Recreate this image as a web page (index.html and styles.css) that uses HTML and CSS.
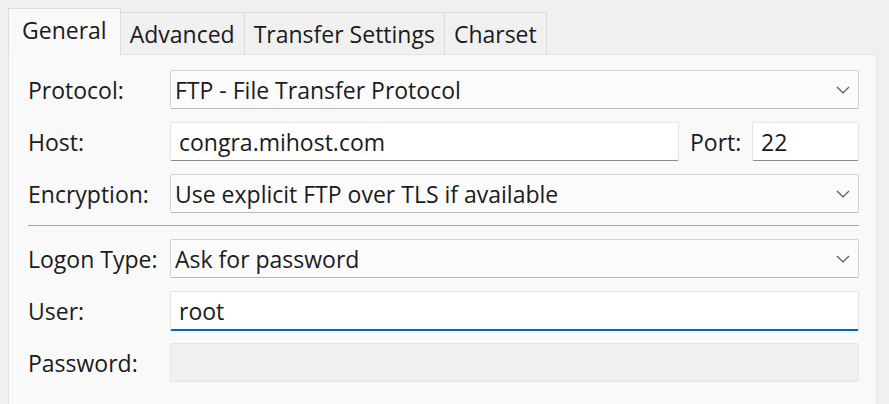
FILE: index.html
```html
<!DOCTYPE html>
<html>
<head>
<meta charset="utf-8">
<link rel="stylesheet" href="styles.css">
</head>
<body>
<div class="tabs">
  <div class="tab active">General</div>
  <div class="tab">Advanced</div>
  <div class="tab">Transfer Settings</div>
  <div class="tab">Charset</div>
</div>
<div class="panel">
  <div class="row">
    <span class="label">Protocol:</span>
    <div class="select"><span>FTP - File Transfer Protocol</span><svg class="chev" width="14" height="8" viewBox="0 0 14 8"><path d="M1 1 L7 7 L13 1" fill="none" stroke="#555" stroke-width="1.2"/></svg></div>
  </div>
  <div class="row">
    <span class="label">Host:</span>
    <div class="hostline">
      <div class="input grow">congra.mihost.com</div>
      <span class="portlabel">Port:</span>
      <div class="input port">22</div>
    </div>
  </div>
  <div class="row">
    <span class="label">Encryption:</span>
    <div class="select"><span>Use explicit FTP over TLS if available</span><svg class="chev" width="14" height="8" viewBox="0 0 14 8"><path d="M1 1 L7 7 L13 1" fill="none" stroke="#555" stroke-width="1.2"/></svg></div>
  </div>
  <div class="sep"></div>
  <div class="row">
    <span class="label">Logon Type:</span>
    <div class="select"><span>Ask for password</span><svg class="chev" width="14" height="8" viewBox="0 0 14 8"><path d="M1 1 L7 7 L13 1" fill="none" stroke="#555" stroke-width="1.2"/></svg></div>
  </div>
  <div class="row">
    <span class="label">User:</span>
    <div class="input focus">root</div>
  </div>
  <div class="row">
    <span class="label">Password:</span>
    <div class="input disabled"></div>
  </div>
</div>
</body>
</html>
```
FILE: styles.css
```css
html, body {
  margin: 0;
  height: 100%;
}
body {
  background: #f0f0f0;
  font-family: "Open Sans", "Noto Sans", sans-serif;
  font-size: 23px;
  color: #1b1b1b;
  padding: 8px 12px 0 8px;
  box-sizing: border-box;
  display: flex;
  flex-direction: column;
}
.tabs {
  display: flex;
  align-items: flex-end;
  height: 46px;
  position: relative;
  z-index: 1;
}
.tab {
  height: 42px;
  box-sizing: border-box;
  padding: 6px 9px 0 9px;
  border: 1px solid #dcdcdc;
  border-bottom: none;
  border-left: none;
  background: #f0f0f0;
  line-height: 30px;
}
.tab.active {
  height: 47px;
  margin-bottom: -1px;
  background: #f9f9f9;
  border-left: 1px solid #dcdcdc;
  padding: 6px 13px 0 13px;
}
.panel {
  flex: 1;
  background: #f9f9f9;
  border: 1px solid #e3e3e3;
  border-bottom: none;
  padding: 15px 17px 0 19px;
}
.row {
  display: flex;
  align-items: center;
  height: 39px;
  margin-bottom: 13px;
}
.label {
  width: 142px;
  flex: none;
  padding-top: 1px;
}
.select, .input {
  flex: 1;
  height: 39px;
  box-sizing: border-box;
  display: flex;
  align-items: center;
  padding-left: 4px;
  padding-top: 1px;
}
.select {
  background: #fbfbfb;
  border: 1px solid #d4d4d4;
  border-bottom-color: #b9b9b9;
  border-radius: 2px;
  justify-content: space-between;
  padding-right: 8px;
}
.input {
  background: #ffffff;
  border: 1px solid #e5e5e5;
  border-bottom-color: #8c8c8c;
  border-radius: 2px;
  padding-left: 8px;
}
.hostline {
  flex: 1;
  display: flex;
  align-items: center;
  height: 39px;
}
.input.grow {
  flex: 1;
}
.portlabel {
  flex: none;
  width: 73px;
  box-sizing: border-box;
  padding: 1px 0 0 11px;
}
.input.port {
  flex: none;
  width: 107px;
}
.input.focus {
  border-bottom: 2px solid #0067c0;
  height: 40px;
  padding-top: 2px;
}
.input.disabled {
  background: #f0f0f0;
  border-color: #e6e6e6;
}
.sep {
  height: 1px;
  background: #a8a8a8;
  margin: -1px 0 13px 0;
}
.chev {
  flex: none;
}
```
